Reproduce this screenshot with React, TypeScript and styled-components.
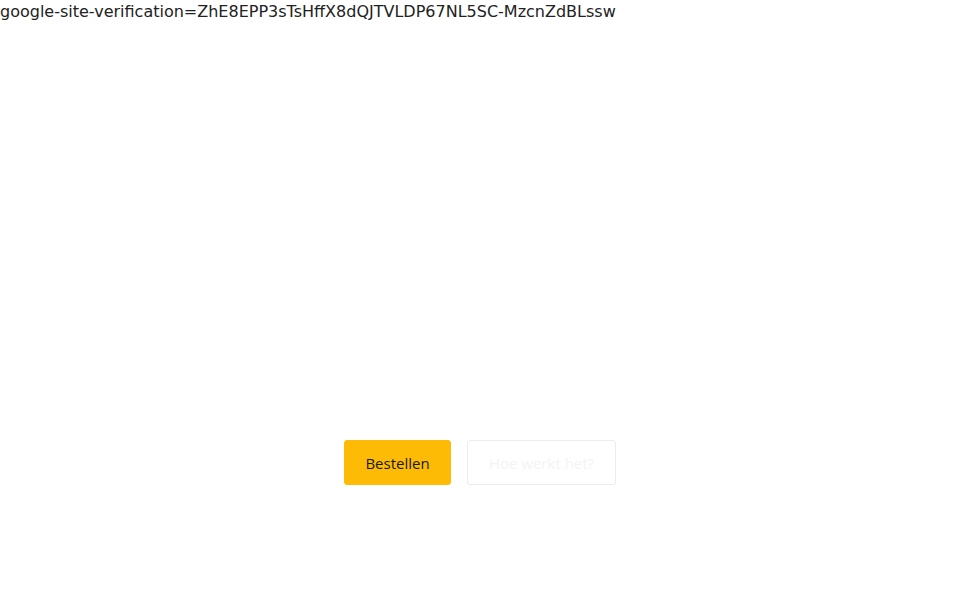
import React from 'react';
import styled, { createGlobalStyle } from 'styled-components';

const GlobalStyle = createGlobalStyle`
  html, body {
    margin: 0;
    padding: 0;
    background: #fff;
  }
  body {
    font-family: "DejaVu Sans", sans-serif;
    font-size: 16px;
    color: #222;
  }
`;

const Verification = styled.div`
  font-family: "DejaVu Sans", sans-serif;
  font-size: 16px;
  line-height: 23px;
  color: #222;
  white-space: nowrap;
`;

const Hero = styled.section`
  display: flex;
  justify-content: center;
  padding-top: 417px;
`;

const Actions = styled.div`
  display: flex;
  gap: 16px;
`;

const Button = styled.a<{ $variant?: 'primary' | 'ghost' }>`
  display: inline-flex;
  align-items: center;
  justify-content: center;
  box-sizing: border-box;
  height: 45px;
  padding: 0 20px;
  border-radius: 3px;
  font-family: "Open Sans", sans-serif;
  font-size: 15px;
  text-decoration: none;
  cursor: pointer;
  background: ${p => (p.$variant === 'ghost' ? 'transparent' : '#fdbb05')};
  color: ${p => (p.$variant === 'ghost' ? '#f4f4f4' : '#1a1a1a')};
  border: 1px solid ${p => (p.$variant === 'ghost' ? '#ececec' : '#fdbb05')};
`;

const App = () => (
  <>
    <GlobalStyle />
    <Verification>google-site-verification=ZhE8EPP3sTsHffX8dQJTVLDP67NL5SC-MzcnZdBLssw</Verification>
    <Hero>
      <Actions>
        <Button $variant="primary" style={{ width: 107 }}>Bestellen</Button>
        <Button $variant="ghost" style={{ width: 149 }}>Hoe werkt het?</Button>
      </Actions>
    </Hero>
  </>
);

export default App;
